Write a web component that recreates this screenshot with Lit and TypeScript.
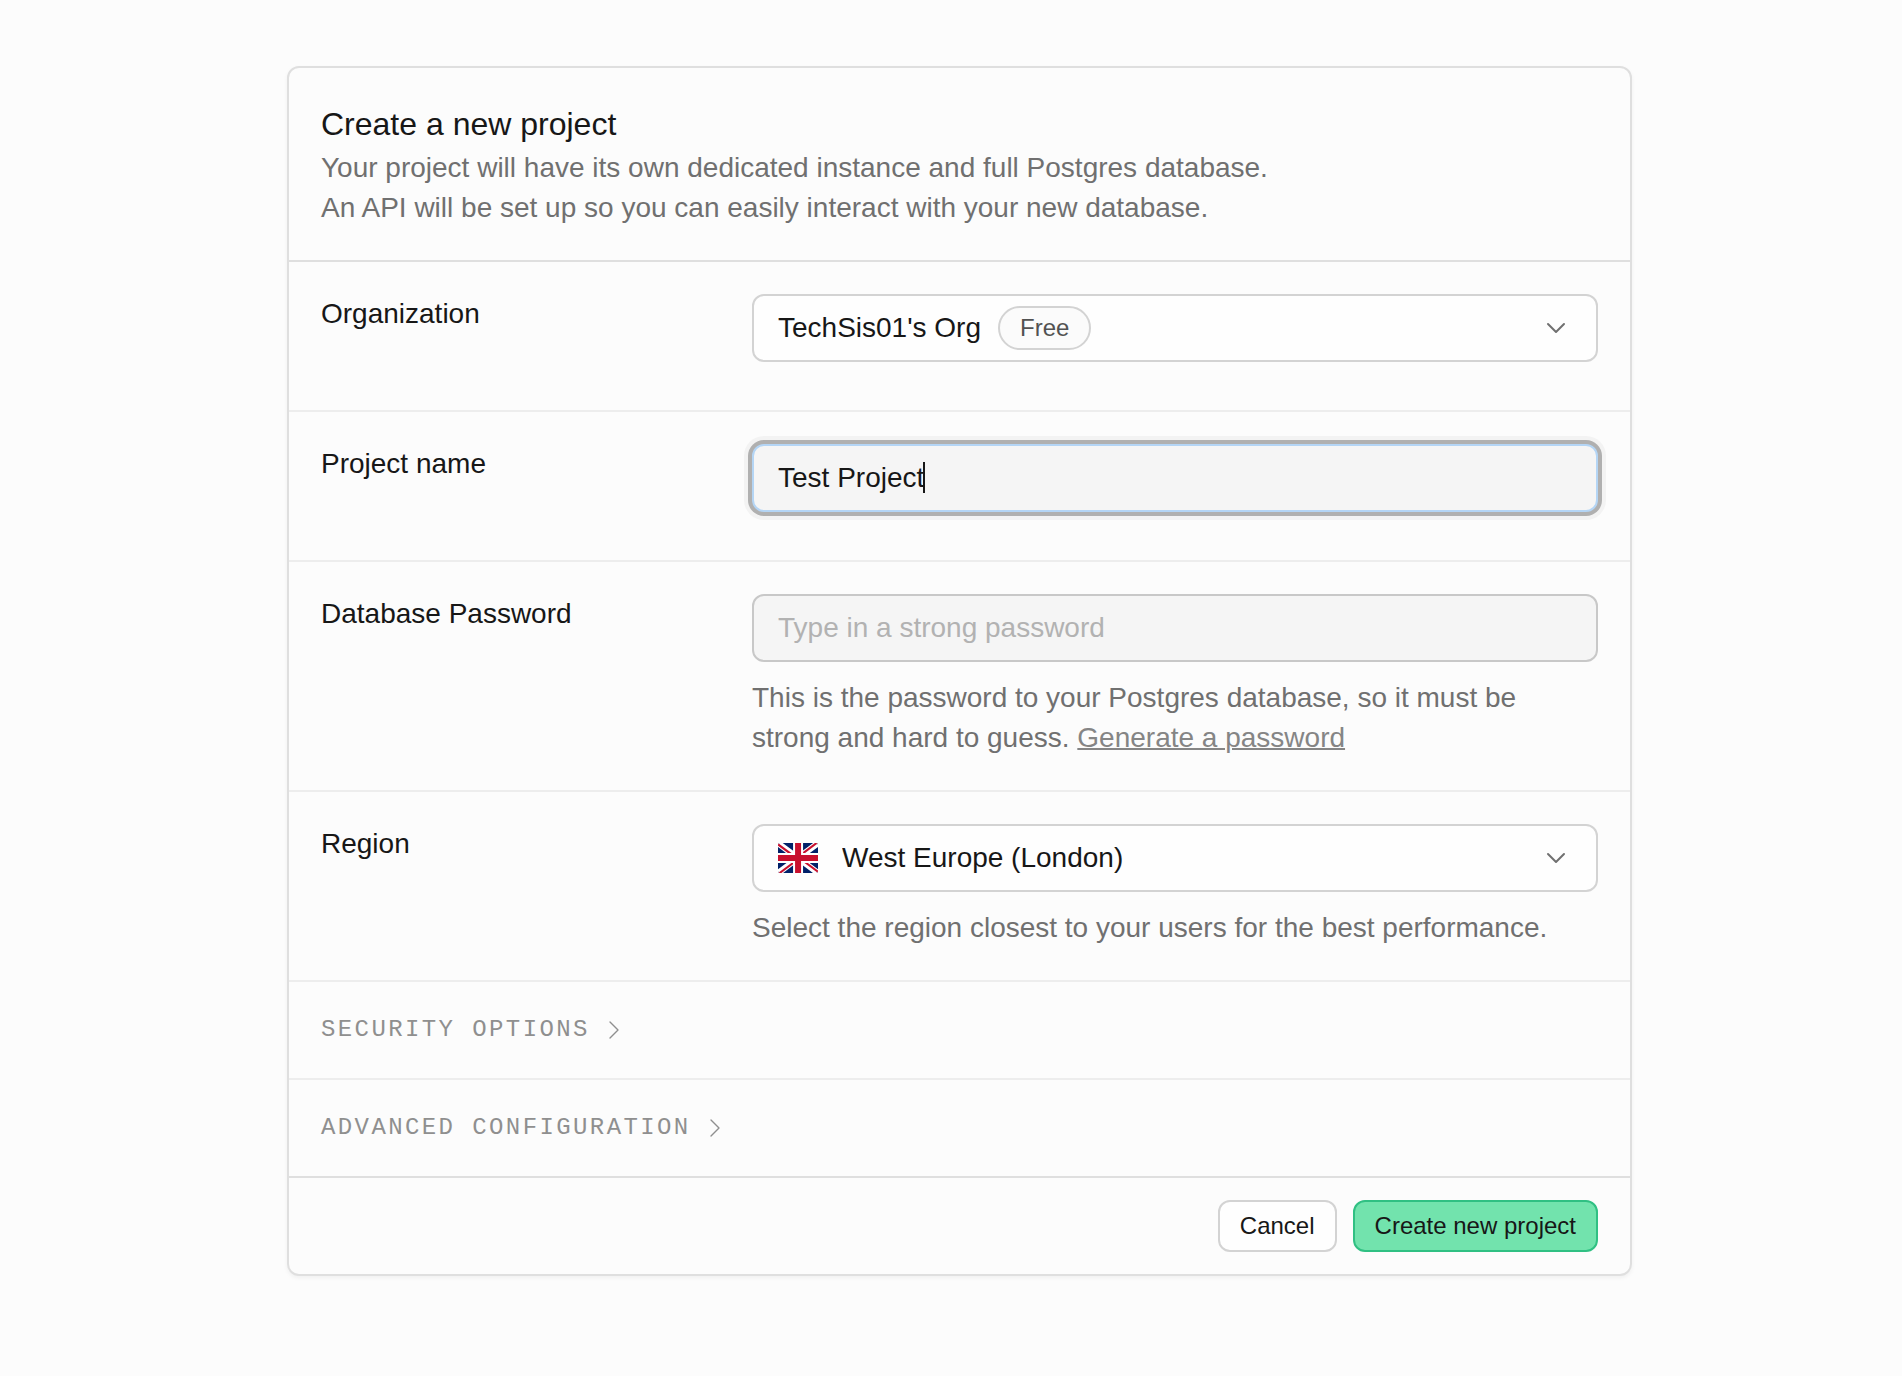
import { LitElement, html, css, svg } from "lit";
import { customElement } from "lit/decorators.js";

const chevronDown = html`<svg class="chevron" viewBox="0 0 24 24" aria-hidden="true">
  <path d="M6 9l6 6 6-6" />
</svg>`;

const chevronRight = html`<svg class="caret-right" viewBox="0 0 24 24" aria-hidden="true">
  <path d="M9 18l6-6-6-6" />
</svg>`;

const flagShapes = svg`
  <path fill="#012169" d="M0 0h640v480H0z" />
  <path fill="#fff" d="M75 0l244 181L562 0h78v62L400 241l240 178v61h-80L320 301 81 480H0v-60l239-178L0 64V0h75z" />
  <path fill="#c8102e" d="M424 281l216 159v40L369 281h55zm-184 20l6 35L54 480H0l240-179zM640 0v3L391 191l2-44L590 0h50zM0 0l239 176h-60L0 42V0z" />
  <path fill="#fff" d="M241 0v480h160V0H241zM0 160v160h640V160H0z" />
  <path fill="#c8102e" d="M0 193v96h640v-96H0zM273 0v480h96V0h-96z" />
`;

@customElement("app-root")
export class AppRoot extends LitElement {
  static styles = css`
    :host {
      display: block;
      min-height: 100vh;
      box-sizing: border-box;
      padding: 66px 270px 66px 287px;
      background: #fcfcfc;
      color: #171717;
      font-family: "Liberation Sans", Arial, sans-serif;
      font-size: 28px;
      line-height: 40px;
    }
    * {
      box-sizing: border-box;
    }
    .card {
      border: 2px solid #dfdfdf;
      border-radius: 12px;
      background: #fcfcfc;
      box-shadow: 0 2px 4px rgba(0, 0, 0, 0.05);
    }
    .header {
      padding: 32px;
      border-bottom: 2px solid #dfdfdf;
    }
    h1 {
      margin: 0;
      font-size: 32px;
      line-height: 48px;
      font-weight: 400;
    }
    p {
      margin: 0;
      color: #707070;
    }
    .row {
      display: grid;
      grid-template-columns: repeat(3, 1fr);
      column-gap: 16px;
      padding: 32px;
      border-bottom: 2px solid #ededed;
    }
    .row.plain {
      padding-bottom: 48px;
    }
    .field {
      grid-column: span 2;
      display: flex;
      flex-direction: column;
      gap: 16px;
    }
    .control {
      position: relative;
    }
    select,
    input {
      display: block;
      width: 100%;
      height: 68px;
      margin: 0;
      padding: 0 24px;
      border: 2px solid #d3d3d3;
      border-radius: 12px;
      outline: none;
      appearance: none;
      background: #fefefe;
      color: #171717;
      font: inherit;
    }
    input {
      background: #f5f5f5;
      border-color: #c8c8c8;
    }
    input::placeholder {
      color: #b2b2b2;
      opacity: 1;
    }
    .active {
      border-color: #b4d5f5;
      box-shadow: 0 0 0 4px #b0b0b0, 0 0 0 8px #f3f3f3;
      caret-color: transparent;
    }
    .with-flag {
      padding-left: 88px;
    }
    .text-caret {
      position: absolute;
      left: 171px;
      top: 18px;
      width: 2px;
      height: 31px;
      background: #171717;
    }
    .badge {
      position: absolute;
      left: 246px;
      top: 12px;
      height: 44px;
      padding: 0 20px;
      border: 2px solid #d3d3d3;
      border-radius: 22px;
      background: #fbfbfb;
      color: #525252;
      font-size: 24px;
      pointer-events: none;
    }
    .flag {
      position: absolute;
      left: 26px;
      top: 19px;
      width: 40px;
      height: 30px;
      border-radius: 2px;
      pointer-events: none;
    }
    .chevron {
      position: absolute;
      right: 26px;
      top: 18px;
      width: 32px;
      height: 32px;
      fill: none;
      stroke: #707070;
      stroke-width: 1.5;
      stroke-linecap: round;
      stroke-linejoin: round;
      pointer-events: none;
    }
    a {
      color: #858585;
      text-decoration: underline;
      text-decoration-thickness: 2px;
    }
    .section {
      display: flex;
      align-items: center;
      gap: 8px;
      width: 100%;
      padding: 32px;
      border: 0;
      border-bottom: 2px solid #ededed;
      background: none;
      color: #8f8f8f;
      font-family: "Liberation Mono", monospace;
      font-size: 24px;
      line-height: 32px;
      letter-spacing: 0.1em;
      text-transform: uppercase;
    }
    .caret-right {
      width: 32px;
      height: 32px;
      fill: none;
      stroke: #8f8f8f;
      stroke-width: 1;
      stroke-linecap: round;
      stroke-linejoin: round;
    }
    .footer {
      display: flex;
      justify-content: flex-end;
      gap: 16px;
      padding: 22px 32px;
      border-top: 2px solid #dfdfdf;
    }
    .sections {
      display: flow-root;
    }
    .sections .section:last-child {
      border-bottom: 0;
    }
    .button {
      height: 52px;
      padding: 0 20px;
      border: 2px solid #d3d3d3;
      border-radius: 12px;
      background: #fefefe;
      color: #171717;
      font-family: inherit;
      font-size: 24px;
      line-height: 32px;
    }
    .primary {
      background: #72e3ad;
      border-color: #30c083;
    }
  `;

  render() {
    return html`
      <form class="card" @submit=${(e: Event) => e.preventDefault()}>
        <header class="header">
          <h1>Create a new project</h1>
          <p>
            Your project will have its own dedicated instance and full Postgres database.<br />
            An API will be set up so you can easily interact with your new database.
          </p>
        </header>

        <div class="row plain">
          <label for="org">Organization</label>
          <div class="field">
            <div class="control">
              <select id="org">
                <option>TechSis01's Org</option>
              </select>
              <span class="badge">Free</span>
              ${chevronDown}
            </div>
          </div>
        </div>

        <div class="row plain">
          <label for="name">Project name</label>
          <div class="field">
            <div class="control">
              <input id="name" class="active" type="text" value="Test Project" autocomplete="off" />
              <span class="text-caret"></span>
            </div>
          </div>
        </div>

        <div class="row">
          <label for="password">Database Password</label>
          <div class="field">
            <input id="password" type="password" placeholder="Type in a strong password" />
            <p>
              This is the password to your Postgres database, so it must be<br />
              strong and hard to guess. <a href="#generate">Generate a password</a>
            </p>
          </div>
        </div>

        <div class="row">
          <label for="region">Region</label>
          <div class="field">
            <div class="control">
              <select id="region" class="with-flag">
                <option>West Europe (London)</option>
              </select>
              <svg class="flag" viewBox="0 0 640 480" aria-hidden="true">${flagShapes}</svg>
              ${chevronDown}
            </div>
            <p>Select the region closest to your users for the best performance.</p>
          </div>
        </div>

        <div class="sections">
          <button class="section" type="button">Security options ${chevronRight}</button>
          <button class="section" type="button">Advanced Configuration ${chevronRight}</button>
        </div>

        <footer class="footer">
          <button class="button" type="button">Cancel</button>
          <button class="button primary" type="submit">Create new project</button>
        </footer>
      </form>
    `;
  }
}
